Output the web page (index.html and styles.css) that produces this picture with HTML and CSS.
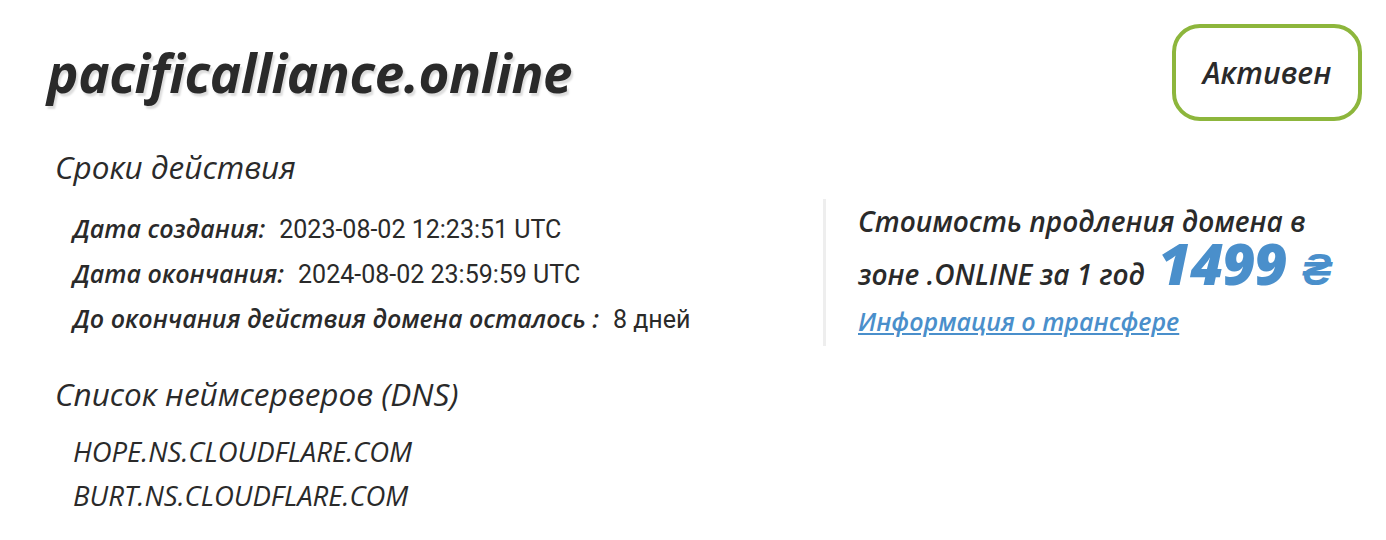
FILE: index.html
```html
<!DOCTYPE html>
<html lang="ru">
<head>
    <meta charset="UTF-8">
    <title>pacificalliance.online</title>
    <link rel="stylesheet" href="styles.css">
</head>
<body>

<div class="domain">
    <div class="domain-head">
        <h1>pacificalliance.online</h1>
        <div class="status">Активен</div>
    </div>

    <!-- Сроки -->
    <h2>Сроки действия</h2>
    <div class="terms">
        <div class="dates">
            <p><b>Дата создания:</b> 2023-08-02 12:23:51 UTC</p>
            <p><b>Дата окончания:</b> 2024-08-02 23:59:59 UTC</p>
            <p><b>До окончания действия домена осталось :</b> 8 дней</p>
        </div>
        <div class="renew">
            <div class="renew-text">
                Стоимость продления домена в зоне .ONLINE за 1 год
                <span class="price">1499 <small>₴</small></span>
            </div>
            <a href="#">Информация о трансфере</a>
        </div>
    </div>

    <!-- DNS -->
    <h2>Список неймсерверов (DNS)</h2>
    <div class="ns">
        <p>HOPE.NS.CLOUDFLARE.COM</p>
        <p>BURT.NS.CLOUDFLARE.COM</p>
    </div>
</div>

</body>
</html>
```

FILE: styles.css
```css
body {
    margin: 0;
    background: #fff;
    color: #2a2a2a;
    font-family: 'Open Sans', sans-serif;
}
.domain {
    padding: 24px 24px 0 47px;
}
.domain-head {
    display: flex;
    justify-content: space-between;
    align-items: center;
}
h1 {
    margin: 0;
    font-size: 53px;
    font-weight: 700;
    font-style: italic;
    letter-spacing: -0.4px;
    text-shadow: 2px 3px 2px #ddd;
}
.status {
    width: 182px;
    height: 89px;
    border: 4px solid #8db63c;
    border-radius: 28px;
    display: flex;
    align-items: center;
    justify-content: center;
    font-size: 30px;
    font-weight: 600;
    font-style: italic;
}
h2 {
    margin: 0 0 0 8px;
    font-size: 31.5px;
    font-weight: 500;
    font-style: italic;
    line-height: 40px;
}
.domain-head + h2 {
    margin-top: 26px;
}
.terms {
    display: flex;
    margin: 12px 0 28px;
}
.dates {
    width: 776px;
    padding: 12px 0 0 26px;
    box-sizing: border-box;
}
.dates p {
    display: flex;
    align-items: baseline;
    height: 45px;
    margin: 0;
    font-family: 'Roboto', sans-serif;
    font-size: 25px;
}
.dates b {
    font-family: 'Open Sans', sans-serif;
    font-size: 25px;
    font-style: italic;
    font-weight: 600;
    margin-right: 14px;
}
.renew {
    border-left: 3px solid #eee;
    padding: 0 0 9px 32px;
}
.renew-text {
    width: 495px;
    font-size: 28px;
    font-weight: 600;
    font-style: italic;
    line-height: 44px;
}
.price {
    margin-left: 6px;
    color: #4a8fcb;
    font-size: 57px;
    font-weight: 800;
    letter-spacing: -1px;
    line-height: 40px;
    white-space: nowrap;
}
.price small {
    font-size: 44px;
    margin-left: 2px;
}
.renew a {
    display: block;
    margin-top: 10px;
    line-height: 30px;
    color: #4a8fcb;
    font-size: 25px;
    font-weight: 600;
    font-style: italic;
}
.ns {
    padding: 16px 0 0 26px;
}
.ns p {
    margin: 0;
    line-height: 44px;
    font-size: 27.5px;
    font-weight: 500;
    font-style: italic;
}
```
